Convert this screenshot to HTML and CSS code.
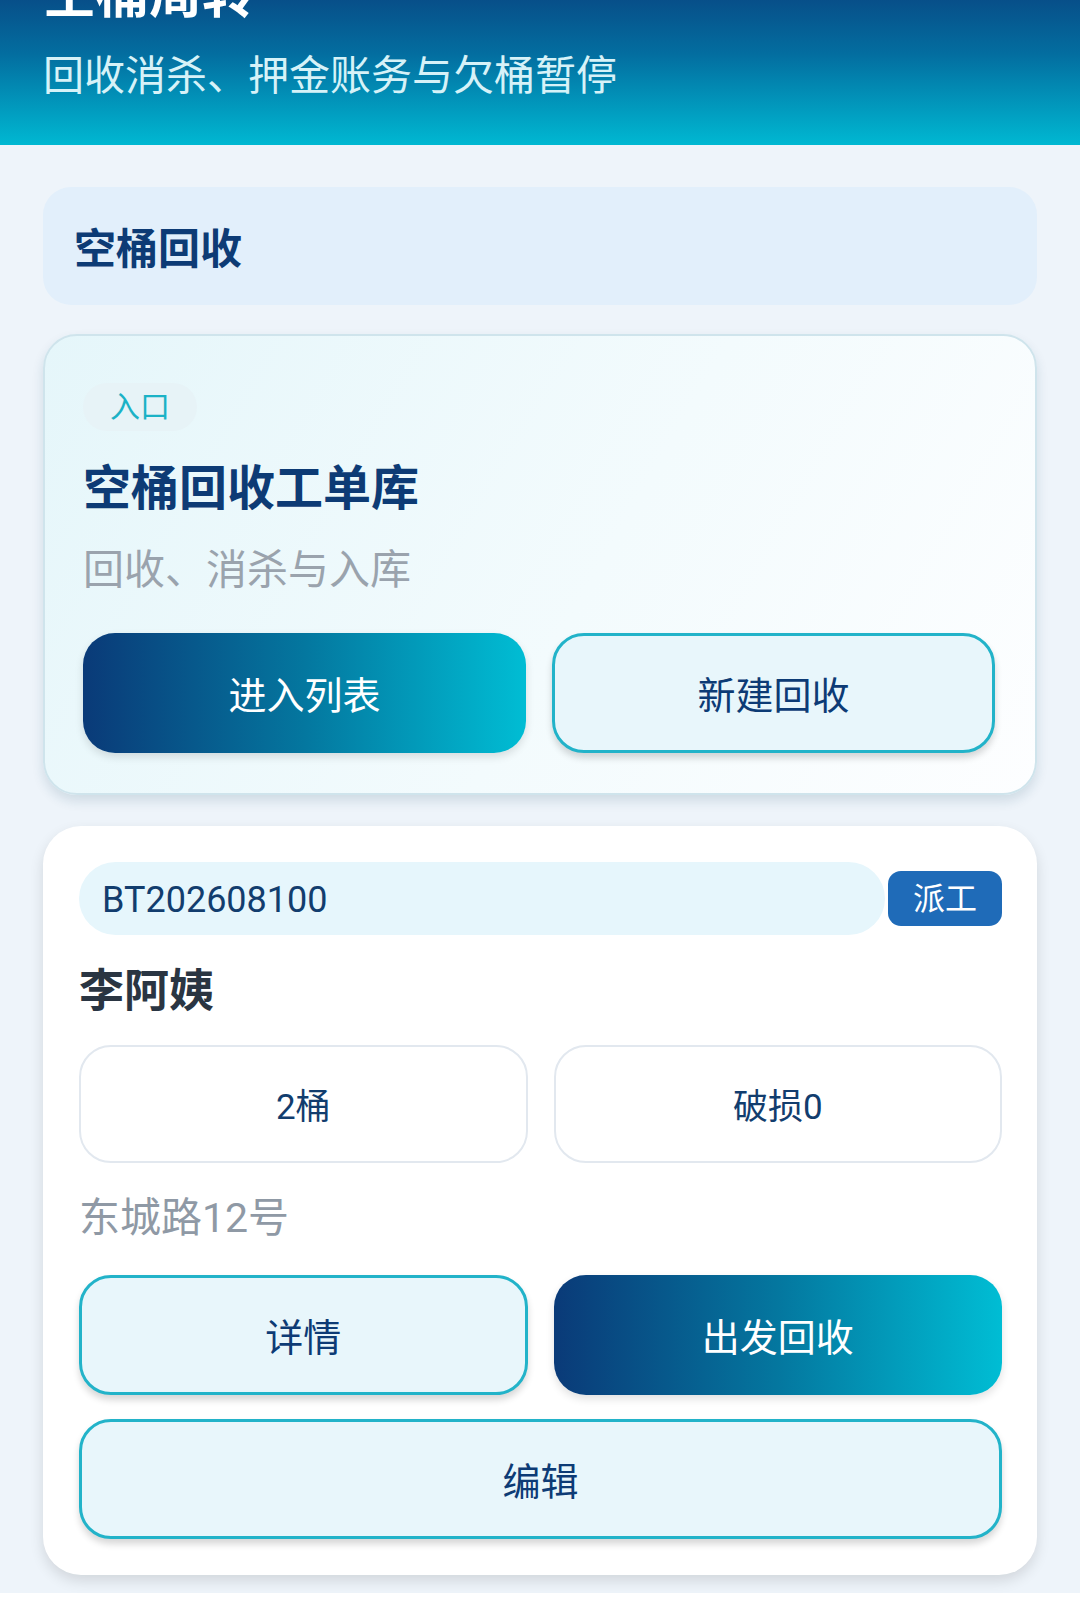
FILE: index.html
```html
<!DOCTYPE html>
<html lang="zh-CN">
<head>
    <meta charset="UTF-8">
    <meta name="viewport" content="width=device-width, initial-scale=1.0">
    <title>空桶周转</title>
    <link rel="stylesheet" href="styles.css">
</head>
<body>
    <header class="hero">
        <h1>空桶周转</h1>
        <p>回收消杀、押金账务与欠桶暂停</p>
    </header>

    <main class="page">
        <div class="section-head">空桶回收</div>

        <section class="entry-card">
            <span class="tag">入口</span>
            <h2>空桶回收工单库</h2>
            <p class="entry-desc">回收、消杀与入库</p>
            <div class="btn-row">
                <button class="btn btn-primary">进入列表</button>
                <button class="btn btn-outline">新建回收</button>
            </div>
        </section>

        <section class="order-card">
            <div class="order-top">
                <div class="order-no">BT202608100</div>
                <span class="status">派工</span>
            </div>
            <h3 class="customer">李阿姨</h3>
            <div class="stats">
                <div class="stat">2桶</div>
                <div class="stat">破损0</div>
            </div>
            <p class="address">东城路12号</p>
            <div class="btn-row">
                <button class="btn btn-outline">详情</button>
                <button class="btn btn-primary">出发回收</button>
            </div>
            <button class="btn btn-outline btn-block">编辑</button>
        </section>
    </main>

    <div class="tabbar"></div>
</body>
</html>
```

FILE: styles.css
```css
:root {
    --navy: #0d3b75;
    --teal: #22b3c9;
    --bg: #eef4fa;
    --soft: #e8f6fb;
}

* {
    box-sizing: border-box;
}

body {
    margin: 0;
    font-family: Roboto, "Noto Sans CJK SC", sans-serif;
    background-color: var(--bg);
    height: 1613px;
    overflow: hidden;
    display: flex;
    flex-direction: column;
}

.hero {
    margin-top: -36px;
    padding: 0 43px 44px;
    background: linear-gradient(180deg, #0a3b7a 0%, #036ea0 50%, #00b8d2 100%);
    color: #fff;
}

.hero h1 {
    margin: 0;
    font-size: 53px;
    line-height: 1.2;
    font-weight: 700;
}

.hero p {
    margin: 24px 0 0;
    font-size: 41px;
    line-height: 1.2;
    color: #d6f2f8;
}

.page {
    flex: 1;
    padding: 42px 43px 0;
}

.section-head {
    height: 118px;
    padding-left: 31px;
    display: flex;
    align-items: center;
    background-color: #e2effb;
    border-radius: 28px;
    font-size: 42px;
    font-weight: 700;
    color: var(--navy);
}

.entry-card {
    margin-top: 29px;
    padding: 47px 40px 40px 38px;
    border: 2px solid #cfe4ec;
    border-radius: 34px;
    background: linear-gradient(120deg, #e5f6fa 0%, #f3fbfd 55%, #fdfeff 100%);
    box-shadow: 0 6px 12px rgba(20, 70, 100, 0.14);
}

.tag {
    display: inline-block;
    height: 48px;
    padding: 0 27px;
    line-height: 48px;
    border-radius: 24px;
    background-color: #e7f3f7;
    color: #1bb2c6;
    font-size: 30px;
}

.entry-card h2 {
    margin: 29px 0 0;
    font-size: 48px;
    line-height: 1.2;
    font-weight: 700;
    color: var(--navy);
}

.entry-desc {
    margin: 29px 0 0;
    font-size: 41px;
    line-height: 1.2;
    color: #9aa3ad;
}

.btn-row {
    display: grid;
    grid-template-columns: 1fr 1fr;
    gap: 26px;
    margin-top: 37px;
}

.btn {
    height: 120px;
    border: none;
    border-radius: 32px;
    font-family: inherit;
    font-size: 38px;
    cursor: pointer;
}

.btn-primary {
    background: linear-gradient(90deg, #0a3a78 0%, #04779f 50%, #00bdd4 100%);
    color: #fff;
    box-shadow: 0 4px 8px rgba(0, 0, 0, 0.12);
}

.btn-outline {
    background-color: var(--soft);
    border: 3px solid var(--teal);
    color: var(--navy);
    box-shadow: 0 5px 7px rgba(0, 0, 0, 0.16);
}

.order-card {
    margin-top: 31px;
    padding: 36px 35px 36px 36px;
    border-radius: 38px;
    background-color: #fff;
    box-shadow: 0 6px 14px rgba(0, 0, 0, 0.12);
}

.order-top {
    display: flex;
    align-items: center;
    gap: 3px;
}

.order-no {
    flex: 1;
    height: 73px;
    padding: 4px 0 0 23px;
    display: flex;
    align-items: center;
    border-radius: 37px;
    background-color: #e6f6fc;
    font-size: 36px;
    color: #123d6e;
}

.status {
    width: 114px;
    height: 55px;
    line-height: 57px;
    text-align: center;
    border-radius: 13px;
    background-color: #1f6bb8;
    color: #fff;
    font-size: 32px;
}

.customer {
    margin: 30px 0 0;
    font-size: 45px;
    line-height: 1.2;
    font-weight: 700;
    color: #2a3542;
}

.stats {
    display: grid;
    grid-template-columns: 1fr 1fr;
    gap: 26px;
    margin-top: 26px;
}

.stat {
    height: 118px;
    display: flex;
    align-items: center;
    justify-content: center;
    border: 2px solid #e2e8ef;
    border-radius: 32px;
    font-size: 35px;
    color: #123d6e;
}

.address {
    margin: 31px 0 0;
    font-size: 41px;
    line-height: 1.2;
    color: #8f99a5;
}

.order-card .btn-row {
    margin-top: 32px;
}

.btn-block {
    display: block;
    width: 100%;
    margin-top: 24px;
}

.tabbar {
    height: 20px;
    background-color: #fff;
}
```
